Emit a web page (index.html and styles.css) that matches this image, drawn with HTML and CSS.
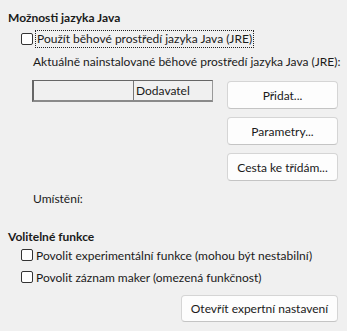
FILE: index.html
```html
<!DOCTYPE html>
<html lang="cs">
<head>
    <meta charset="UTF-8">
    <title>Možnosti jazyka Java</title>
    <link rel="stylesheet" href="styles.css">
</head>
<body>
    <div class="page">
        <div class="group-title first">Možnosti jazyka Java</div>
        <label class="check-row">
            <span class="box"></span>
            <span class="focus-label">Použít běhové prostředí jazyka Java (JRE)</span>
        </label>
        <div class="indent caption">Aktuálně nainstalované běhové prostředí jazyka Java (JRE):</div>

        <div class="jre-row">
            <div class="jre-table">
                <div class="col col-first"></div>
                <div class="col">Dodavatel</div>
            </div>
            <div class="buttons">
                <button class="btn">Přidat...</button>
                <button class="btn">Parametry...</button>
                <button class="btn">Cesta ke třídám...</button>
            </div>
        </div>

        <div class="indent location">Umístění:</div>

        <div class="group-title second">Volitelné funkce</div>
        <label class="check-row small first-opt">
            <span class="box"></span>
            <span>Povolit experimentální funkce (mohou být nestabilní)</span>
        </label>
        <label class="check-row small">
            <span class="box"></span>
            <span>Povolit záznam maker (omezená funkčnost)</span>
        </label>
        <div class="expert">
            <button class="btn wide">Otevřít expertní nastavení</button>
        </div>
    </div>
</body>
</html>
```

FILE: styles.css
```css
body {
    margin: 0;
    background: #f0f0f0;
    font-family: Lato, "Noto Sans", sans-serif;
    font-size: 12px;
    color: #1a1a1a;
}

.page {
    width: 347px;
    height: 331px;
    padding: 0 9px 0 8px;
    box-sizing: border-box;
    overflow: hidden;
    white-space: nowrap;
}

.group-title {
    font-weight: bold;
    line-height: 16px;
    margin-top: 13px;
}

.group-title.first {
    margin-top: 10px;
}

.group-title.second {
    margin-top: 22px;
}

.check-row {
    display: flex;
    align-items: center;
    gap: 3px;
    margin-left: 13px;
    margin-top: 4px;
    height: 17px;
}

.check-row.small {
    margin-top: 6px;
    height: 16px;
}

.check-row.first-opt {
    margin-top: 2px;
}

.box {
    width: 10px;
    height: 10px;
    border: 1px solid #333;
    border-radius: 2px;
    background: #fff;
    flex: none;
}

.focus-label {
    outline: 1px dotted #222;
    outline-offset: 0;
    padding: 0 1px;
    line-height: 16px;
}

.indent {
    margin-left: 25px;
    line-height: 16px;
}

.caption {
    margin-top: 7px;
}

.jre-row {
    display: flex;
    margin-top: 10px;
    margin-left: 24px;
}

.jre-table {
    display: flex;
    width: 181px;
    height: 22px;
    box-sizing: border-box;
    border-top: 1px solid #666;
    border-left: 2px solid #666;
    border-right: 1px solid #999;
    border-bottom: 2px solid #8a8a8a;
}

.col {
    line-height: 19px;
    padding-left: 2px;
}

.col-first {
    width: 97px;
    border-right: 1px solid #777;
}

.buttons {
    margin-left: auto;
    display: flex;
    flex-direction: column;
    gap: 8px;
    margin-top: 1px;
}

.btn {
    font: inherit;
    color: #1a1a1a;
    width: 111px;
    height: 28px;
    background: #fdfdfd;
    border: 1px solid #d5d5d5;
    border-bottom-color: #c4c4c4;
    border-radius: 4px;
    padding: 0;
}

.location {
    margin-top: 10px;
}

.expert {
    display: flex;
    justify-content: flex-end;
    margin-top: 10px;
}

.btn.wide {
    width: 157px;
    height: 27px;
}
```
